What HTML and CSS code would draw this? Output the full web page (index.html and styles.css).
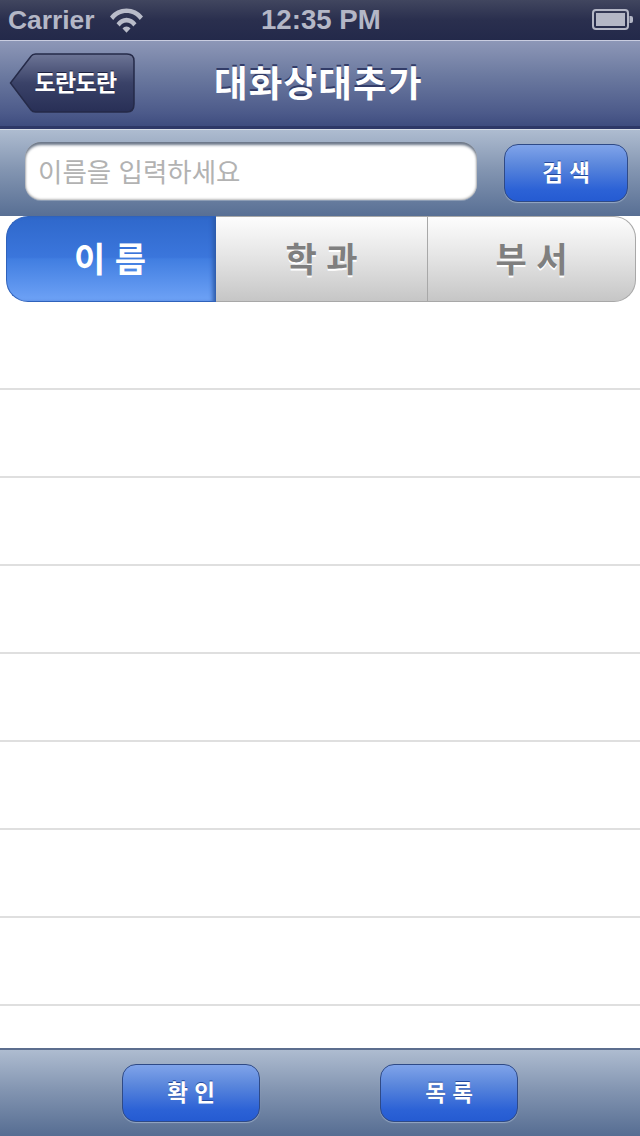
FILE: index.html
```html
<!DOCTYPE html>
<html lang="ko">
<head>
<meta charset="utf-8">
<title>대화상대추가</title>
<link rel="stylesheet" href="styles.css">
</head>
<body>
<div class="app">
  <header class="status">
    <div class="status-left">
      <span class="carrier">Carrier</span>
      <svg class="wifi" width="33" height="25" viewBox="0 0 33 25">
        <path d="M0 8.500C4 3.300 10 .5 16.500 .5S29 3.300 33 8.500L29.800 12C26.500 7.600 21.800 5 16.500 5S6.500 7.600 3.200 12Z" fill="#b9bcc9"/>
        <path d="M6.500 15.200C9 11.800 12.500 9.700 16.500 9.700s7.500 2.100 10 5.500l-3.200 3.200C21.500 15.900 19.200 14.500 16.500 14.500s-5 1.400-6.800 3.900Z" fill="#b9bcc9"/>
        <path d="M12.500 20.500c1-1.300 2.400-2.100 4-2.100s3 .8 4 2.100l-4 4.200Z" fill="#b9bcc9"/>
      </svg>
    </div>
    <span class="clock">12:35 PM</span>
    <svg class="battery" width="42" height="22" viewBox="0 0 42 22">
      <rect x="1" y="1" width="35" height="19" rx="3" fill="none" stroke="#b4b7c6" stroke-width="2"/>
      <rect x="4" y="4" width="29" height="13" fill="#b4b7c6"/>
      <path d="M37.500 7H39a2 2 0 0 1 2 2v3a2 2 0 0 1-2 2h-1.500Z" fill="#b4b7c6"/>
    </svg>
  </header>

  <nav class="navbar">
    <button class="back">
      <svg class="back-shape" width="126" height="62" viewBox="0 0 126 62">
        <defs>
          <linearGradient id="backfill" x1="0" y1="0" x2="0" y2="1">
            <stop offset="0" stop-color="#6d7596"/>
            <stop offset=".5" stop-color="#3a4268"/>
            <stop offset="1" stop-color="#282f56"/>
          </linearGradient>
        </defs>
        <path d="M1.500 30 22 3.200Q23.500 1 26.500 1H118q7 0 7 7V51q0 8-7 8H26.500Q23.500 59 22 57Z" fill="url(#backfill)" stroke="#252a48" stroke-width="1.500"/>
      </svg>
      <span class="back-label">도란도란</span>
    </button>
    <h1 class="title">대화상대추가</h1>
  </nav>

  <form class="search">
    <div class="field">이름을 입력하세요</div>
    <button type="button" class="blue-btn search-btn">검 색</button>
  </form>

  <div class="segments">
    <div class="seg seg-active"><span>이 름</span></div>
    <div class="seg"><span>학 과</span></div>
    <div class="seg seg-last"><span>부 서</span></div>
  </div>

  <ul class="list">
    <li class="row"></li>
    <li class="row"></li>
    <li class="row"></li>
    <li class="row"></li>
    <li class="row"></li>
    <li class="row"></li>
    <li class="row"></li>
    <li class="row"></li>
  </ul>

  <footer class="toolbar">
    <button class="blue-btn tool-btn">확 인</button>
    <button class="blue-btn tool-btn">목 록</button>
  </footer>
</div>
</body>
</html>
```

FILE: styles.css
```css
* { box-sizing: border-box; }
html, body { margin: 0; padding: 0; background: #fff; }
body { font-family: "Noto Sans CJK KR", "Liberation Sans", sans-serif; }
.app {
  width: 640px;
  height: 1136px;
  display: flex;
  flex-direction: column;
  overflow: hidden;
}
.status {
  height: 40px;
  flex: none;
  display: flex;
  align-items: center;
  padding: 0 6px 0 8px;
  background: linear-gradient(#41465f 0, #2a2f4e 50%, #23294a 100%);
  color: #b4b7c6;
  font: bold 27.600px "Liberation Sans", sans-serif;
}
.status-left { display: flex; align-items: center; gap: 15px; flex: 0 0 253px; }
.carrier { font-size: 26.400px; }
.clock { flex: none; white-space: nowrap; }
.battery { margin-left: auto; flex: none; }
.wifi { flex: none; }
.navbar {
  height: 89px;
  flex: none;
  display: flex;
  align-items: center;
  padding: 0 0 1px 9px;
  border-top: 1px solid #c9cde0;
  border-bottom: 3px solid #2d3767;
  background: linear-gradient(#8d97b7 0, #6c7aa0 40%, #4c5a8a 85%, #3e4c7f 100%);
}
.back {
  position: relative;
  width: 126px;
  height: 62px;
  margin-top: 2px;
  padding: 0 0 6px 7px;
  border: 0;
  background: none;
  display: flex;
  align-items: center;
  justify-content: center;
  flex: none;
}
.back-shape { position: absolute; left: 0; top: 0; }
.back-label {
  position: relative;
  color: #fff;
  font: 700 23px "Noto Sans CJK KR", sans-serif;
  letter-spacing: -.6px;
  text-shadow: 0 -1px 0 #1c2140;
}
.title {
  margin: 0 0 1px 79px;
  color: #fff;
  font: 700 36.500px/1 "Noto Sans CJK KR", sans-serif;
  text-shadow: 0 -2px 0 #323c68;
  letter-spacing: 1.200px;
  white-space: nowrap;
}
.search {
  height: 87px;
  flex: none;
  margin: 0;
  display: flex;
  align-items: flex-start;
  padding: 12px 12px 0 25px;
  gap: 27px;
  border-top: 1px solid #d5dbe5;
  background: linear-gradient(#aebcd0 0, #8496b2 45%, #586f94 100%);
}
.field {
  width: 452px;
  height: 58px;
  flex: none;
  border-radius: 16px;
  background: #fff;
  box-shadow: inset 0 4px 3px -1px #6a7688, inset 0 0 3px #777, 0 1px 0 #8d9db5;
  color: #b2b2b2;
  font-size: 26.500px;
  line-height: 57px;
  padding-left: 13px;
  white-space: nowrap;
}
.blue-btn {
  border: 1.500px solid #2f4a86;
  border-radius: 14px;
  background: linear-gradient(#80a4ea 0, #5b87dc 35%, #2c62d6 80%, #255bd2 100%);
  box-shadow: 0 1px 1px rgba(200, 215, 235, .5);
  color: #fff;
  font: 600 22.500px/1 "Noto Sans CJK KR", sans-serif;
  text-shadow: 0 -1px 0 #244a9c;
  padding: 0 0 4px;
  flex: none;
}
.search-btn { width: 124px; height: 58px; margin: 2px 0 0 0; }
.segments {
  height: 86px;
  flex: none;
  margin: 0 4px 0 6px;
  display: flex;
  border-radius: 22px;
  background: #fff;
}
.seg {
  flex: 1 1 0;
  display: flex;
  align-items: center;
  justify-content: center;
  background: linear-gradient(#fdfdfd 0, #e6e6e6 45%, #c6c6c6 100%);
  border: solid #a8a8a8;
  border-width: 1px 1px 1px 0;
  color: #7f7f7f;
  font: 700 34px/1 "Noto Sans CJK KR", sans-serif;
  text-shadow: 0 2px 0 #fff;
  padding-bottom: 2px;
}
.seg-last { border-radius: 0 22px 22px 0; flex: 0 0 208px; }
.seg-active {
  flex: 0 0 210px;
  padding-right: 3px;
  border: 1px solid #2f62bb;
  border-right: 0;
  border-radius: 22px 0 0 22px;
  background: linear-gradient(#2f68cb 0, #3b76dc 48%, #417ee1 50%, #6ea2f6 100%);
  box-shadow: inset -5px 0 4px -2px #2c5aa8;
  color: #fff;
  text-shadow: none;
}
.list {
  flex: 1 1 auto;
  margin: 0;
  padding: 0;
  list-style: none;
  background: #fff;
}
.row {
  height: 88px;
  border-bottom: 2px solid #dfdfdf;
}
.toolbar {
  height: 88px;
  flex: none;
  display: flex;
  align-items: flex-start;
  padding: 14px 122px 0;
  justify-content: space-between;
  border-top: 2px solid #5c6e8e;
  background: linear-gradient(#aebcd0 0, #8496b2 45%, #566d92 100%);
}
.tool-btn { width: 138px; height: 58px; }
```
